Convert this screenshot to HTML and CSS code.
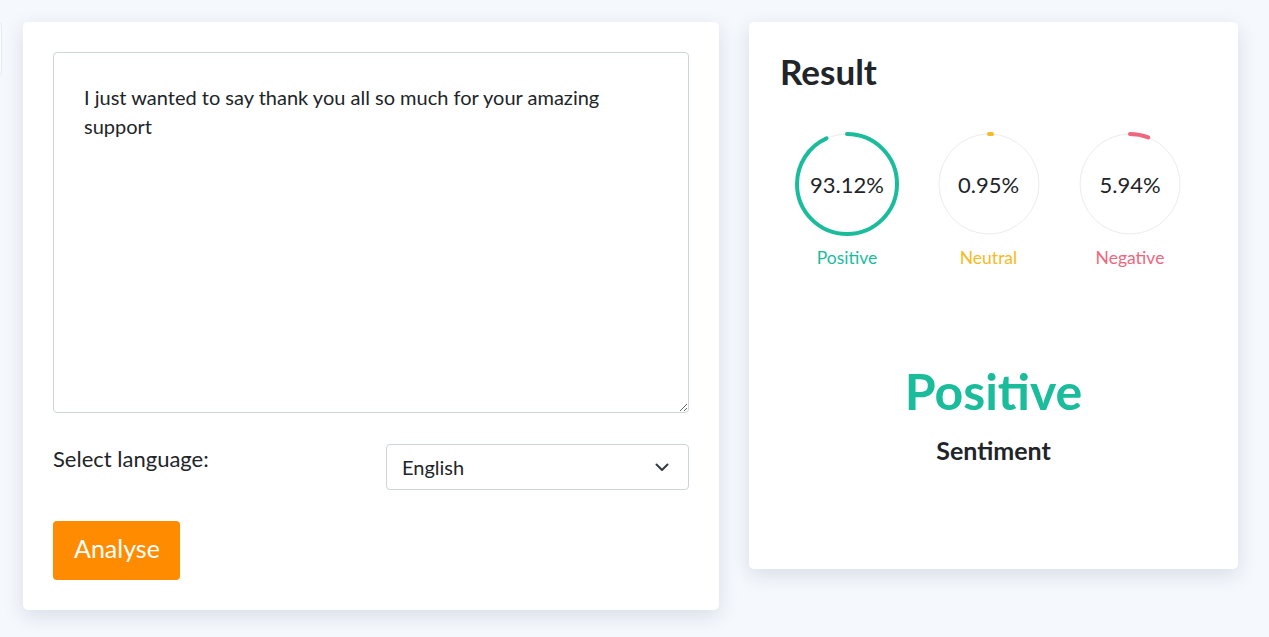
FILE: index.html
```html
<!DOCTYPE html>
<html lang="en">
<head>
<meta charset="utf-8">
<title>Sentiment Analysis</title>
<link rel="stylesheet" href="styles.css">
</head>
<body>
<div class="edge-tab"></div>
<main class="layout">
  <section class="card input-card">
    <textarea class="text-input">I just wanted to say thank you all so much for your amazing support</textarea>
    <div class="lang-row">
      <label class="lang-label" for="lang">Select language:</label>
      <div class="select-wrap">
        <select id="lang" class="lang-select">
          <option>English</option>
        </select>
        <svg class="chevron" width="14" height="9" viewBox="0 0 14 9"><path d="M1.5 1.5 L7 7 L12.5 1.5" fill="none" stroke="#343a40" stroke-width="2" stroke-linecap="round" stroke-linejoin="round"/></svg>
      </div>
    </div>
    <div><button class="analyse-btn">Analyse</button></div>
  </section>
  <section class="card result-card">
    <h2 class="result-title">Result</h2>
    <div class="gauges">
      <div class="gauge">
        <div class="ring">
          <svg width="106" height="106" viewBox="0 0 106 106">
            <circle cx="53" cy="53" r="50" class="track"/>
            <circle cx="53" cy="53" r="50" class="bar bar-pos" stroke-dasharray="292.55 400" transform="rotate(-90 53 53)"/>
          </svg>
          <span class="ring-value">93.12%</span>
        </div>
        <div class="gauge-label pos">Positive</div>
      </div>
      <div class="gauge">
        <div class="ring">
          <svg width="106" height="106" viewBox="0 0 106 106">
            <circle cx="53" cy="53" r="50" class="track"/>
            <circle cx="53" cy="53" r="50" class="bar bar-neu" stroke-dasharray="2.98 400" transform="rotate(-90 53 53)"/>
          </svg>
          <span class="ring-value">0.95%</span>
        </div>
        <div class="gauge-label neu">Neutral</div>
      </div>
      <div class="gauge">
        <div class="ring">
          <svg width="106" height="106" viewBox="0 0 106 106">
            <circle cx="53" cy="53" r="50" class="track"/>
            <circle cx="53" cy="53" r="50" class="bar bar-neg" stroke-dasharray="18.66 400" transform="rotate(-90 53 53)"/>
          </svg>
          <span class="ring-value">5.94%</span>
        </div>
        <div class="gauge-label neg">Negative</div>
      </div>
    </div>
    <div class="verdict">
      <div class="verdict-main">Positive</div>
      <div class="verdict-sub">Sentiment</div>
    </div>
  </section>
</main>
</body>
</html>
```

FILE: styles.css
```css
* { box-sizing: border-box; }

html, body {
  margin: 0;
  padding: 0;
  background: #f5f8fd;
  font-family: Lato, "Open Sans", sans-serif;
  color: #212529;
  overflow: hidden;
}

body {
  width: 1269px;
  height: 637px;
  position: relative;
}

.edge-tab {
  position: absolute;
  left: -60px;
  top: 22px;
  width: 62px;
  height: 54px;
  background: #fbfcfe;
  border: 1px solid #e6eaf0;
  border-radius: 4px;
}

.layout {
  display: grid;
  grid-template-columns: 696px 489px;
  column-gap: 30px;
  align-items: start;
  padding: 22px 0 0 23px;
}

.card {
  background: #fff;
  border-radius: 5px;
  box-shadow: 0 6px 20px rgba(30, 45, 70, 0.13);
}

.input-card {
  padding: 30px;
  display: flex;
  flex-direction: column;
  gap: 31px;
}

.text-input {
  display: block;
  width: 636px;
  height: 361px;
  border: 1px solid #ced4da;
  border-radius: 4px;
  padding: 30px 30px;
  font-family: Lato, "Open Sans", sans-serif;
  font-size: 20px;
  line-height: 29px;
  color: #212529;
  resize: vertical;
  margin: 0;
}

.lang-row {
  display: grid;
  grid-template-columns: 1fr 1fr;
  column-gap: 30px;
}

.lang-label {
  font-size: 22px;
  line-height: 30px;
  padding-top: 0;
}

.select-wrap {
  position: relative;
}

.lang-select {
  display: block;
  width: 100%;
  height: 46px;
  appearance: none;
  -webkit-appearance: none;
  background: #fff;
  border: 1px solid #ced4da;
  border-radius: 4px;
  padding: 0 40px 0 15px;
  font-family: Lato, "Open Sans", sans-serif;
  font-size: 20px;
  color: #212529;
  margin: 0;
}

.chevron {
  position: absolute;
  right: 20px;
  top: 19px;
  pointer-events: none;
}

.analyse-btn {
  background: #ff8c00;
  color: #fff;
  border: none;
  border-radius: 4px;
  font-family: Lato, "Open Sans", sans-serif;
  font-size: 25px;
  height: 59px;
  padding: 0 20px 5px 21px;
  cursor: pointer;
}

.result-card {
  padding: 28px 31px 104px 31px;
}

.result-title {
  margin: 0;
  font-size: 35px;
  font-weight: 700;
  line-height: 42px;
  color: #212529;
}

.gauges {
  display: flex;
  gap: 7.5px;
  margin-top: 39px;
}

.gauge {
  width: 134px;
  display: flex;
  flex-direction: column;
  align-items: center;
}

.ring {
  position: relative;
  width: 106px;
  height: 106px;
}

.ring svg {
  display: block;
}

.track {
  fill: none;
  stroke: #ececec;
  stroke-width: 1;
}

.bar {
  fill: none;
  stroke-width: 4;
  stroke-linecap: round;
}

.bar-pos { stroke: #1abc9c; }
.bar-neu { stroke: #f7b924; }
.bar-neg { stroke: #ef667d; }

.ring-value {
  position: absolute;
  inset: 0;
  display: flex;
  align-items: center;
  justify-content: center;
  font-size: 22px;
  color: #212529;
}

.gauge-label {
  margin-top: 10px;
  font-size: 17.5px;
  line-height: 22px;
}

.gauge-label.pos { color: #1abc9c; }
.gauge-label.neu { color: #f7b924; }
.gauge-label.neg { color: #ef667d; }

.verdict {
  margin-top: 93px;
  text-align: center;
}

.verdict-main {
  font-size: 50px;
  font-weight: 700;
  line-height: 58px;
  color: #1abc9c;
}

.verdict-sub {
  margin-top: 15px;
  font-size: 25px;
  font-weight: 700;
  line-height: 30px;
  color: #212529;
}
```
